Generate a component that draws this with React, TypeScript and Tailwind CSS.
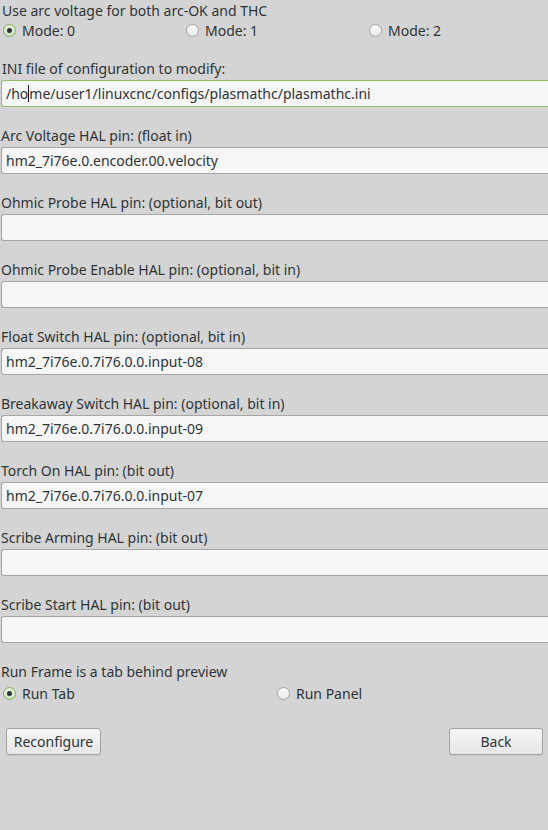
import React from "react";

function Radio({ checked }: { checked?: boolean }) {
  if (checked) {
    return (
      <span className="flex h-[13px] w-[13px] shrink-0 items-center justify-center rounded-full border border-[#7fae5f] bg-gradient-to-b from-[#e6f1de] to-[#cfe4c0]">
        <span className="h-[5px] w-[5px] rounded-full bg-[#2e3436]" />
      </span>
    );
  }
  return (
    <span className="h-[13px] w-[13px] shrink-0 rounded-full border border-[#a2a2a2] bg-gradient-to-b from-[#fcfcfc] to-[#e9e9e9]" />
  );
}

function RadioItem({ label, checked }: { label: string; checked?: boolean }) {
  return (
    <div className="flex h-[20px] items-center gap-[6px] pt-px">
      <Radio checked={checked} />
      <span className="leading-[20px]">{label}</span>
    </div>
  );
}

function Field({ label, value }: { label: string; value?: React.ReactNode }) {
  return (
    <div className="mt-[20px]">
      <div className="pl-[1px] leading-[18px]">{label}</div>
      <div className="mt-[2px] ml-px flex h-[27px] w-[560px] items-center rounded-l-[3px] border border-r-0 border-[#a6a6a6] bg-[#f6f6f6] pl-[4px] leading-[18px]">
        {value}
      </div>
    </div>
  );
}

export default function App() {
  return (
    <div className="h-[830px] w-[548px] overflow-hidden bg-[#d4d4d4] font-['Noto_Sans',sans-serif] text-[14px] leading-[18px] text-[#2e3436]">
      <div className="pt-[2px] pl-[2px] leading-[18px]">
        Use arc voltage for both arc-OK and THC
      </div>
      <div className="grid grid-cols-[183px_183px_183px] pl-[3px]">
        <RadioItem label="Mode: 0" checked />
        <RadioItem label="Mode: 1" />
        <RadioItem label="Mode: 2" />
      </div>

      <div className="mt-[20px]">
        <div className="pl-[2px] leading-[18px]">
          INI file of configuration to modify:
        </div>
        <div className="mt-[2px] ml-px flex h-[27px] w-[560px] items-center rounded-l-[3px] border border-r-0 border-[#8cc06a] bg-[#f6f6f6] pl-[4px] leading-[18px]">
          <span>/ho</span>
          <span className="inline-block h-[17px] w-px bg-[#1a1a1a]" />
          <span>me/user1/linuxcnc/configs/plasmathc/plasmathc.ini</span>
        </div>
      </div>

      <Field
        label="Arc Voltage HAL pin: (float in)"
        value="hm2_7i76e.0.encoder.00.velocity"
      />
      <Field label="Ohmic Probe HAL pin: (optional, bit out)" />
      <Field label="Ohmic Probe Enable HAL pin: (optional, bit in)" />
      <Field
        label="Float Switch HAL pin: (optional, bit in)"
        value="hm2_7i76e.0.7i76.0.0.input-08"
      />
      <Field
        label="Breakaway Switch HAL pin: (optional, bit in)"
        value="hm2_7i76e.0.7i76.0.0.input-09"
      />
      <Field
        label="Torch On HAL pin: (bit out)"
        value="hm2_7i76e.0.7i76.0.0.input-07"
      />
      <Field label="Scribe Arming HAL pin: (bit out)" />
      <Field label="Scribe Start HAL pin: (bit out)" />

      <div className="mt-[20px] pl-[1px] leading-[18px]">
        Run Frame is a tab behind preview
      </div>
      <div className="mt-[2px] grid grid-cols-[274px_274px] pl-[3px]">
        <RadioItem label="Run Tab" checked />
        <RadioItem label="Run Panel" />
      </div>

      <div className="mt-[25px] flex justify-between pl-[6px] pr-[5px]">
        <button className="flex h-[27px] w-[95px] items-center justify-center rounded-[3px] border border-[#a4a4a4] bg-gradient-to-b from-[#f7f7f7] to-[#e6e6e6] leading-[18px] text-[#2e3436] shadow-[0_1px_0_rgba(0,0,0,0.06)]">
          Reconfigure
        </button>
        <button className="flex h-[27px] w-[94px] items-center justify-center rounded-[3px] border border-[#a4a4a4] bg-gradient-to-b from-[#f7f7f7] to-[#e6e6e6] leading-[18px] text-[#2e3436] shadow-[0_1px_0_rgba(0,0,0,0.06)]">
          Back
        </button>
      </div>
    </div>
  );
}
